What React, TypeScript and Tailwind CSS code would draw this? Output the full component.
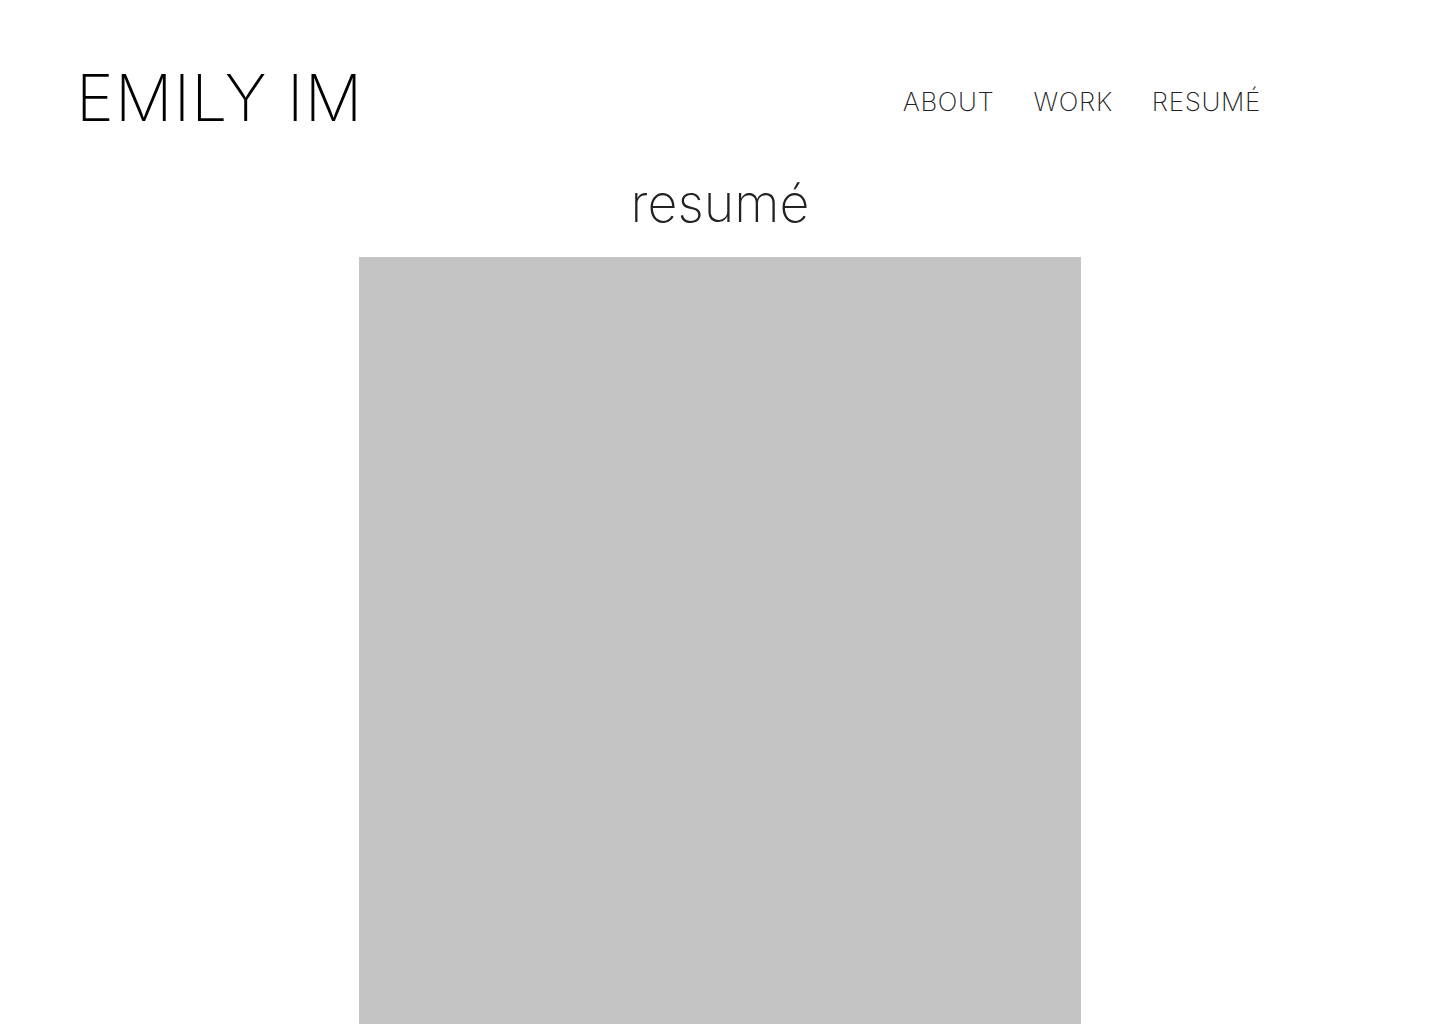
const navItems = ["ABOUT", "WORK", "RESUMÉ"];

export default function App() {
  return (
    <div
      className="min-h-screen bg-white text-black"
      style={{ fontFamily: "Inter, 'Noto Sans', sans-serif" }}
    >
      {/* Header */}
      <header className="flex items-end justify-between pl-[76px] pr-[179px] pt-[66px]">
        <h1 className="text-[64px] leading-[64px] font-extralight tracking-[0.02em]">EMILY IM</h1>
        <nav className="flex gap-[39px] pb-[15px]">
          {navItems.map((item) => (
            <a
              key={item}
              href="#"
              className="text-[26px] leading-none font-extralight tracking-[0.025em] text-[#222]"
            >
              {item}
            </a>
          ))}
        </nav>
      </header>

      {/* Page title */}
      <h2 className="mt-[42px] text-center text-[52px] leading-[64px] font-extralight text-[#222]">
        resumé
      </h2>

      {/* Resume placeholder */}
      <div className="mx-auto mt-[21px] h-[800px] w-[722px] bg-[#c4c4c4]" />
    </div>
  );
}
